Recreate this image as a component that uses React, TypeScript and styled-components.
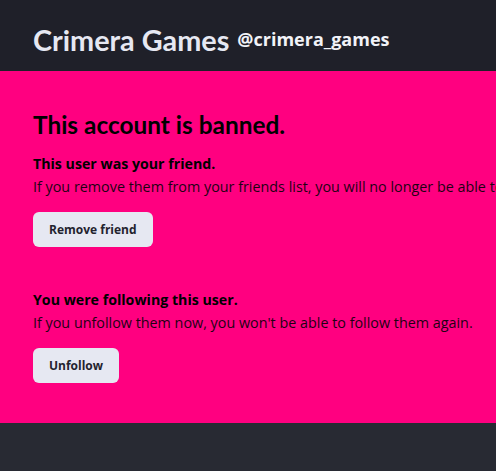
import React from "react";
import styled, { createGlobalStyle } from "styled-components";

const Global = createGlobalStyle`
  html, body { margin: 0; padding: 0; background: #282a33; }
  body { font-family: "Open Sans", "Noto Sans", sans-serif; overflow: hidden; }
  #root { width: 496px; min-height: 471px; overflow: hidden; }
`;

const Page = styled.div`
  display: flex;
  flex-direction: column;
  width: 496px;
  min-height: 471px;
  background: #282a33;
`;

const Header = styled.header`
  display: flex;
  align-items: center;
  align-self: stretch;
  gap: 8px;
  height: 71px;
  box-sizing: border-box;
  padding: 22px 33px 13px;
  background: #1f2029;
  color: #e6e8f2;
  white-space: nowrap;
`;

const Title = styled.h1`
  margin: 0;
  font-family: "Lato", sans-serif;
  font-weight: 700;
  font-size: 28.8px;
  line-height: 36px;
`;

const Handle = styled.span`
  padding-bottom: 3px;
  font-family: "Open Sans", sans-serif;
  font-weight: 700;
  font-size: 18px;
  line-height: 24px;
  color: #f2f3f8;
`;

const Main = styled.main`
  display: flex;
  flex-direction: column;
  height: 352px;
  box-sizing: border-box;
  padding: 39px 33px 0;
  background: #ff0080;
  color: #1a0010;
  white-space: nowrap;
`;

const Heading = styled.h2`
  margin: 0 0 13px;
  font-family: "Lato", sans-serif;
  font-weight: 700;
  font-size: 24.4px;
  line-height: 30px;
  color: #000;
`;

const Section = styled.section<{ $gap?: number }>`
  display: flex;
  flex-direction: column;
  align-items: flex-start;
  margin-bottom: ${(p) => p.$gap ?? 0}px;
`;

const Strong = styled.p`
  margin: 0;
  font-weight: 700;
  font-size: 14.2px;
  line-height: 22px;
  color: #000;
`;

const Text = styled.p`
  margin: 0;
  font-size: 14.35px;
  line-height: 23px;
  color: #1e0014;
`;

const Button = styled.button`
  margin-top: 14px;
  height: 35px;
  padding: 0 16px;
  border: none;
  border-radius: 6px;
  background: #e6e8f2;
  color: #23232e;
  font-family: "Open Sans", sans-serif;
  font-weight: 700;
  font-size: 12px;
  cursor: pointer;
`;

const Footer = styled.footer`
  flex: 1;
  background: #282a33;
`;

export default function App() {
  return (
    <>
      <Global />
      <Page>
        <Header>
          <Title>Crimera Games</Title>
          <Handle>@crimera_games</Handle>
        </Header>
        <Main>
          <Heading>This account is banned.</Heading>
          <Section $gap={42}>
            <Strong>This user was your friend.</Strong>
            <Text>
              If you remove them from your friends list, you will no longer be able to add them back.
            </Text>
            <Button>Remove friend</Button>
          </Section>
          <Section>
            <Strong>You were following this user.</Strong>
            <Text>If you unfollow them now, you won't be able to follow them again.</Text>
            <Button>Unfollow</Button>
          </Section>
        </Main>
        <Footer />
      </Page>
    </>
  );
}
